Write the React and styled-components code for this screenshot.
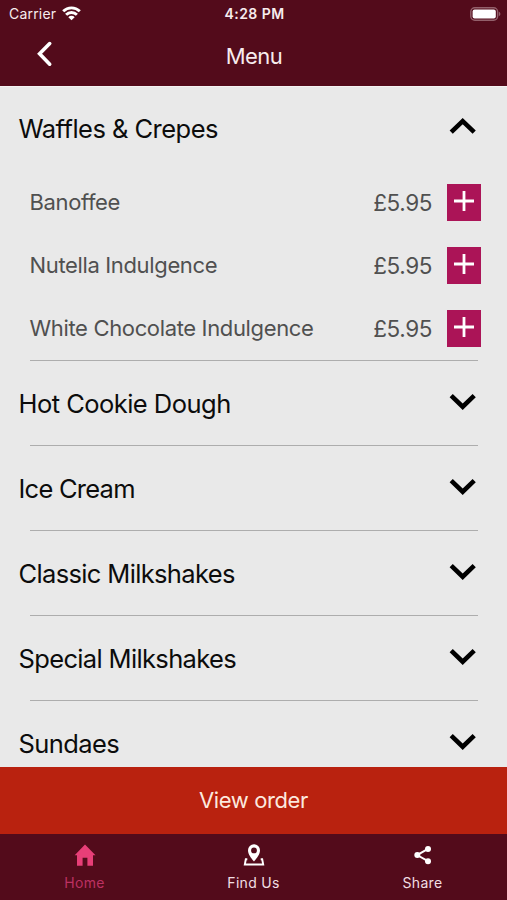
import React, { useState } from "react";
import styled, { createGlobalStyle } from "styled-components";

const GlobalStyle = createGlobalStyle`
  * { box-sizing: border-box; }
  body { margin: 0; font-family: Inter, "Liberation Sans", sans-serif; font-feature-settings: "calt" 0; }
  button { font: inherit; border: 0; padding: 0; background: none; cursor: pointer; }
`;

const Screen = styled.div`
  width: 507px;
  height: 900px;
  display: flex;
  flex-direction: column;
  overflow: hidden;
  background: #e9e9e9;
`;

const Header = styled.header`
  flex: none;
  height: 86px;
  background: #530b1b;
  color: #f7ecee;
`;

const StatusBar = styled.div`
  height: 27px;
  display: grid;
  grid-template-columns: 1fr auto 1fr;
  align-items: center;
  padding: 0 6px 0 9px;
`;

const Carrier = styled.div`
  display: flex;
  align-items: center;
  gap: 6px;
  font-size: 14px;
  letter-spacing: 0.2px;
`;

const Clock = styled.div`
  font-size: 14px;
  font-weight: 600;
  letter-spacing: 0.45px;
  margin-right: 1px;
`;

const BatteryIcon = styled.svg`
  justify-self: end;
`;

const NavBar = styled.div`
  height: 57px;
  display: grid;
  grid-template-columns: 90px 1fr 90px;
  align-items: center;
`;

const BackButton = styled.button`
  height: 54px;
  display: flex;
  align-items: center;
  align-self: start;
  padding-left: 36px;
`;

const Title = styled.h1`
  margin: 0 -1px 0 0;
  text-align: center;
  font-size: 22px;
  font-weight: 400;
  letter-spacing: -0.5px;
`;

const MenuList = styled.main`
  flex: 1;
  min-height: 0;
  overflow: hidden;
  border-top: 1px solid #f5f3f3;
`;

const Section = styled.section`
  height: ${(p) => (p.$open ? "auto" : "85px")};
`;

const SectionHeader = styled.button`
  width: 100%;
  height: 84px;
  display: flex;
  align-items: center;
  justify-content: space-between;
  padding: ${(p) => (p.$open ? "0" : "1px")} 31px 0 18.5px;
  color: #0c0c0c;
`;

const SectionTitle = styled.span`
  font-size: 25.5px;
  line-height: 32px;
  padding-top: ${(p) => (p.$open ? "0" : "1px")};
  letter-spacing: ${(p) => p.$track}px;
`;

const ItemRow = styled.div`
  height: 63.1px;
  display: flex;
  align-items: center;
  padding: 0 26px 0 29.5px;
  color: #505050;
  font-size: 22.5px;
`;

const ItemName = styled.span`
  flex: 1;
  padding-bottom: 2px;
  font-size: 22px;
  letter-spacing: -0.35px;
`;

const Price = styled.span`
  margin-right: 15px;
  padding-bottom: 1px;
  letter-spacing: -0.4px;
`;

const AddButton = styled.button`
  width: 34px;
  height: 37px;
  display: flex;
  justify-content: center;
  padding-top: 7px;
  && {
    background: #ab1457;
  }
`;

const Divider = styled.hr`
  height: 1px;
  margin: 0 29px 0 30px;
  border: 0;
  background: #adadad;
`;

const OrderButton = styled.button`
  flex: none;
  height: 67px;
  && {
    background: #b9220f;
    font-size: 22px;
    padding-bottom: 1px;
  }
  color: #fce9df;
  letter-spacing: -0.4px;
`;

const TabBar = styled.nav`
  flex: none;
  height: 66px;
  display: grid;
  grid-template-columns: repeat(3, 1fr);
  background: #530b1b;
`;

const Tab = styled.button`
  display: flex;
  flex-direction: column;
  align-items: center;
  padding-top: 10px;
  color: ${(p) => (p.$active ? "#e83f78" : "#fff")};
`;

const TabLabel = styled.span`
  margin-top: 6px;
  font-size: 14px;
  line-height: 20px;
  letter-spacing: 0.3px;
  color: ${(p) => (p.$active ? "#bd3162" : "#f1dfe3")};
`;

const Wifi = () => (
  <svg width="19" height="15" viewBox="0 0 19 15" fill="none" stroke="#fff" strokeWidth="2.9">
    <path d="M1.2 5.3a11.8 11.8 0 0 1 16.6 0" />
    <path d="M4.1 8.8a7.6 7.6 0 0 1 10.8 0" />
    <path d="M9.5 14.2 6.3 11.2a4.5 4.5 0 0 1 6.4 0z" fill="#fff" stroke="none" />
  </svg>
);

const Battery = () => (
  <BatteryIcon width="31" height="14" viewBox="0 0 31 14">
    <rect x="0.8" y="0.8" width="26.8" height="12.4" rx="4" fill="none" stroke="#93606b" strokeWidth="1.4" />
    <rect x="2.6" y="2.6" width="23.2" height="8.8" rx="2" fill="#fff" />
    <path d="M28.8 4.8c2.1.7 2.1 3.7 0 4.4z" fill="#93606b" />
  </BatteryIcon>
);

const BackIcon = () => (
  <svg width="17" height="26" viewBox="0 0 17 26" fill="none" stroke="#fff" strokeWidth="3.6" strokeLinecap="round">
    <path d="M13.7 2.6 3.6 12.8 13.7 23.2" />
  </svg>
);

const Chevron = ({ up }) => (
  <svg width="27" height="24" viewBox="0 0 27 24" fill="none" stroke="#000" strokeWidth="4.6">
    <path d={up ? "M2.2 15.1 13.7 4.1 25.2 15.1" : "M2.2 3.7 13.7 14.7 25.2 3.7"} />
  </svg>
);

const Plus = () => (
  <svg width="20" height="20" viewBox="0 0 20 20" stroke="#fff" strokeWidth="2.8">
    <path d="M0 10H20M10 0V20" />
  </svg>
);

const HomeIcon = () => (
  <svg width="22" height="23" viewBox="0 0 22 23" fill="currentColor">
    <path d="M11 0.6 0.7 11.3H3V21.8H8.600V13.800H13.400V21.800H19V11.300H21.500Z" />
  </svg>
);

const PinIcon = () => (
  <svg width="22" height="23" viewBox="0 0 22 23" fill="currentColor">
    <path
      fillRule="evenodd"
      d="M11 .3a6 6 0 0 1 6 6c0 4.200-3 7.700-6 11.200-3-3.500-6-7-6-11.200a6 6 0 0 1 6-6zm0 3.200a2.900 2.900 0 1 0 0 5.800 2.900 2.900 0 0 0 0-5.800z"
    />
    <path d="M4.300 15.200H2.800L1.800 20.500h18.400l-1-5.300h-1.500" fill="none" stroke="currentColor" strokeWidth="1.900" />
  </svg>
);

const ShareIcon = () => (
  <svg width="22" height="23" viewBox="0 0 22 23" fill="currentColor">
    <path d="M16 4.900 5.100 11.100l10.900 6" fill="none" stroke="currentColor" strokeWidth="1.900" />
    <circle cx="16" cy="4.900" r="3" />
    <circle cx="5.300" cy="11.100" r="3" />
    <circle cx="16" cy="17.200" r="3" />
  </svg>
);

const sections = [
  {
    title: "Waffles & Crepes",
    track: -0.53,
    items: [
      { name: "Banoffee", price: "£5.95" },
      { name: "Nutella Indulgence", price: "£5.95" },
      { name: "White Chocolate Indulgence", price: "£5.95" },
    ],
  },
  { title: "Hot Cookie Dough", track: -0.53 },
  { title: "Ice Cream", track: -0.75 },
  { title: "Classic Milkshakes", track: -0.65 },
  { title: "Special Milkshakes", track: -0.65 },
  { title: "Sundaes", track: -0.6 },
];

const tabs = [
  { label: "Home", Icon: HomeIcon },
  { label: "Find Us", Icon: PinIcon },
  { label: "Share", Icon: ShareIcon },
];

export default function App() {
  const [open, setOpen] = useState("Waffles & Crepes");
  const [tab, setTab] = useState("Home");
  return (
    <Screen>
      <GlobalStyle />
      <Header>
        <StatusBar>
          <Carrier>Carrier <Wifi /></Carrier>
          <Clock>4:28 PM</Clock>
          <Battery />
        </StatusBar>
        <NavBar>
          <BackButton aria-label="Back"><BackIcon /></BackButton>
          <Title>Menu</Title>
        </NavBar>
      </Header>
      <MenuList>
        {sections.map((s) => {
          const isOpen = open === s.title;
          return (
            <Section key={s.title} $open={isOpen}>
              <SectionHeader $open={isOpen} onClick={() => setOpen(isOpen ? null : s.title)}>
                <SectionTitle $track={s.track} $open={isOpen}>{s.title}</SectionTitle>
                <Chevron up={isOpen} />
              </SectionHeader>
              {isOpen && s.items && s.items.map((item) => (
                <ItemRow key={item.name}>
                  <ItemName>{item.name}</ItemName>
                  <Price>{item.price}</Price>
                  <AddButton aria-label={`Add ${item.name}`}><Plus /></AddButton>
                </ItemRow>
              ))}
              <Divider />
            </Section>
          );
        })}
      </MenuList>
      <OrderButton>View order</OrderButton>
      <TabBar>
        {tabs.map(({ label, Icon }) => (
          <Tab key={label} $active={tab === label} onClick={() => setTab(label)}>
            <Icon />
            <TabLabel $active={tab === label}>{label}</TabLabel>
          </Tab>
        ))}
      </TabBar>
    </Screen>
  );
}
